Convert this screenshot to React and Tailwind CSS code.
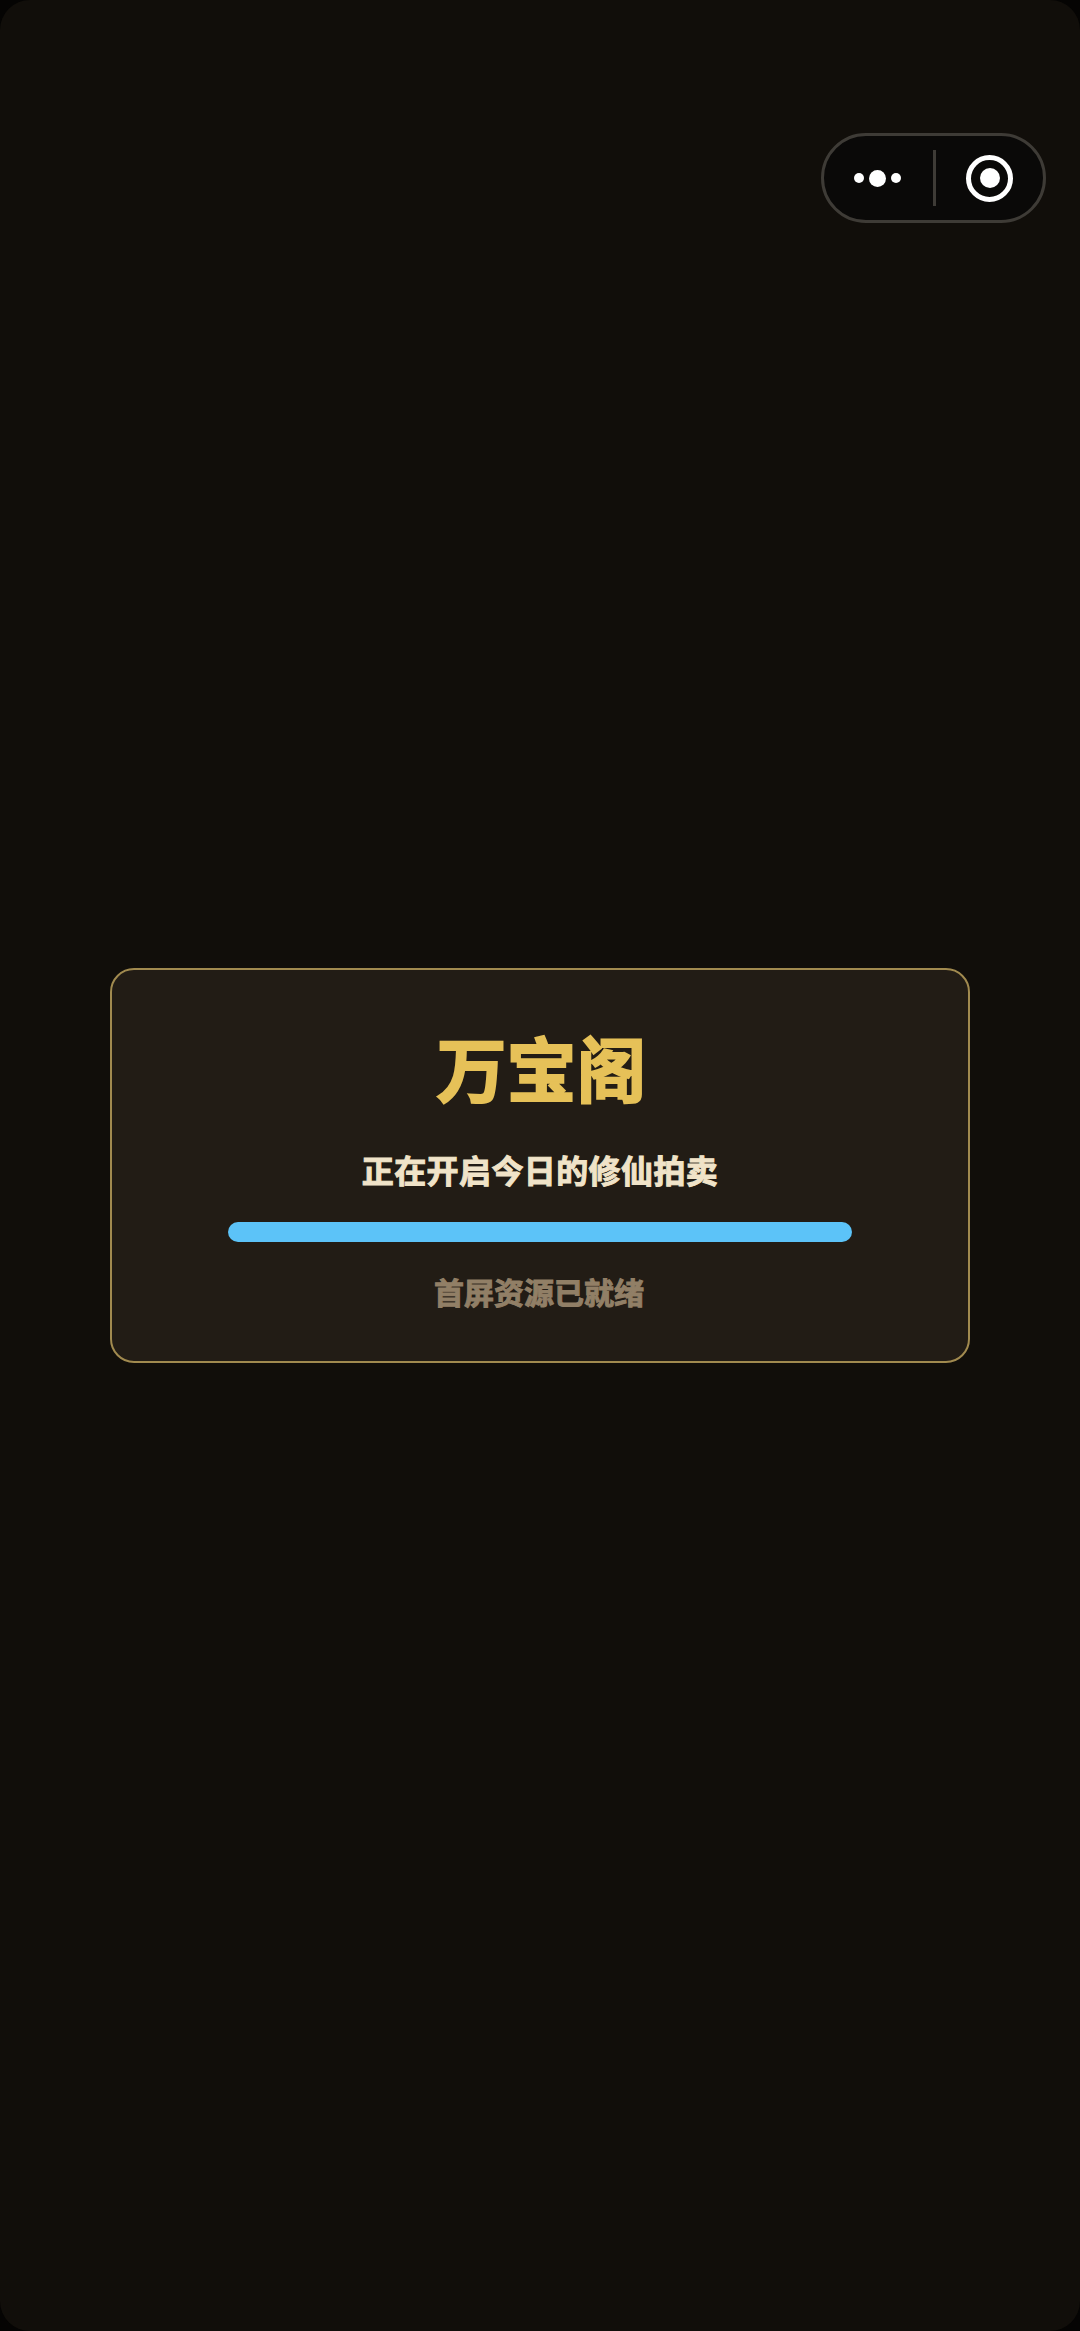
const cjk = "font-['Inter','Noto_Sans_CJK_SC',sans-serif]";

function CapsuleMenu() {
  return (
    <div className="absolute top-[133px] right-[34px] flex h-[90px] w-[225px] items-center rounded-full border-[3px] border-[#3e3b36] bg-[#0a0908]">
      <div className="flex flex-1 items-center justify-center gap-[5px] pr-[2px]">
        <span className="h-[10px] w-[10px] rounded-full bg-white"></span>
        <span className="h-[17px] w-[17px] rounded-full bg-white"></span>
        <span className="h-[10px] w-[10px] rounded-full bg-white"></span>
      </div>
      <div className="h-[56px] w-[3px] bg-[#3e3b36]"></div>
      <div className="flex flex-1 items-center justify-center pl-[1px]">
        <div className="flex h-[47px] w-[47px] items-center justify-center rounded-full border-[5px] border-white">
          <span className="h-[20px] w-[20px] rounded-full bg-white"></span>
        </div>
      </div>
    </div>
  );
}

export default function App() {
  return (
    <div className="h-[2331px] w-[1080px] bg-[#050403]">
      <div className={`relative flex h-full w-full items-center justify-center rounded-[30px] bg-[#110e0a] ${cjk}`}>
        <CapsuleMenu />

        {/* Loading card */}
        <div className="flex h-[395px] w-[860px] flex-col items-center rounded-[24px] border-2 border-[#a18a4f] bg-[#221c15] px-[116px] pt-[60px]">
          <h1 className="pl-[3px] text-[70px] leading-[84px] font-bold text-[#e6c158] [-webkit-text-stroke:2px_#e6c158]">万宝阁</h1>
          <p className="mt-[35px] text-[32px] leading-[46px] font-bold tracking-[0.4px] text-[#f0e3c8] [-webkit-text-stroke:1px_#f0e3c8]">正在开启今日的修仙拍卖</p>
          <div className="mt-[27px] h-[20px] w-full rounded-full bg-[#5cc3f8]"></div>
          <p className="mt-[29px] pr-[2px] text-[30px] leading-[44px] font-bold text-[#917f66] [-webkit-text-stroke:1px_#917f66]">首屏资源已就绪</p>
        </div>
      </div>
    </div>
  );
}
